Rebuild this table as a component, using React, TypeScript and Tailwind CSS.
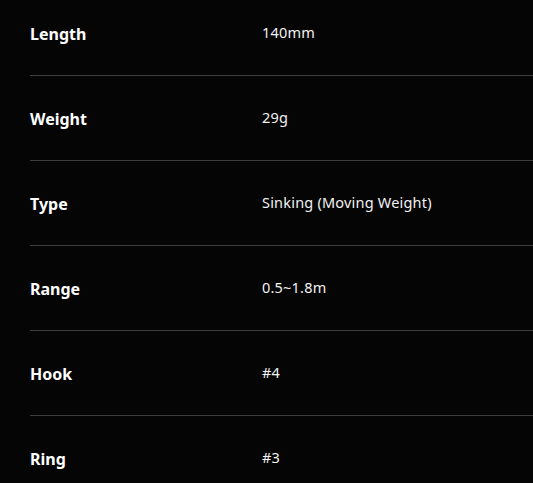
const specs = [
  { label: "Length", value: "140mm" },
  { label: "Weight", value: "29g" },
  { label: "Type", value: "Sinking (Moving Weight)" },
  { label: "Range", value: "0.5~1.8m" },
  { label: "Hook", value: "#4" },
  { label: "Ring", value: "#3" },
];

export default function App() {
  return (
    <div
      className="w-[533px] h-[483px] overflow-hidden bg-[#050505] text-white pl-[30px]"
      style={{ fontFamily: '"Noto Sans", "Open Sans", sans-serif' }}
    >
      {specs.map((s, i) => (
        <div
          key={s.label}
          className={`flex items-start border-b border-[#404040] ${
            i === 0 ? "h-[76px] pt-[22px]" : "h-[85px] pt-[31px]"
          }`}
        >
          <div className="flex items-center h-6 w-full">
            <div className="w-[232px] text-[16px] font-bold leading-6">{s.label}</div>
            <div className="text-[14.5px] leading-5 mb-[4px] tracking-[0.2px] text-[#f2f2f2]">{s.value}</div>
          </div>
        </div>
      ))}
    </div>
  );
}
